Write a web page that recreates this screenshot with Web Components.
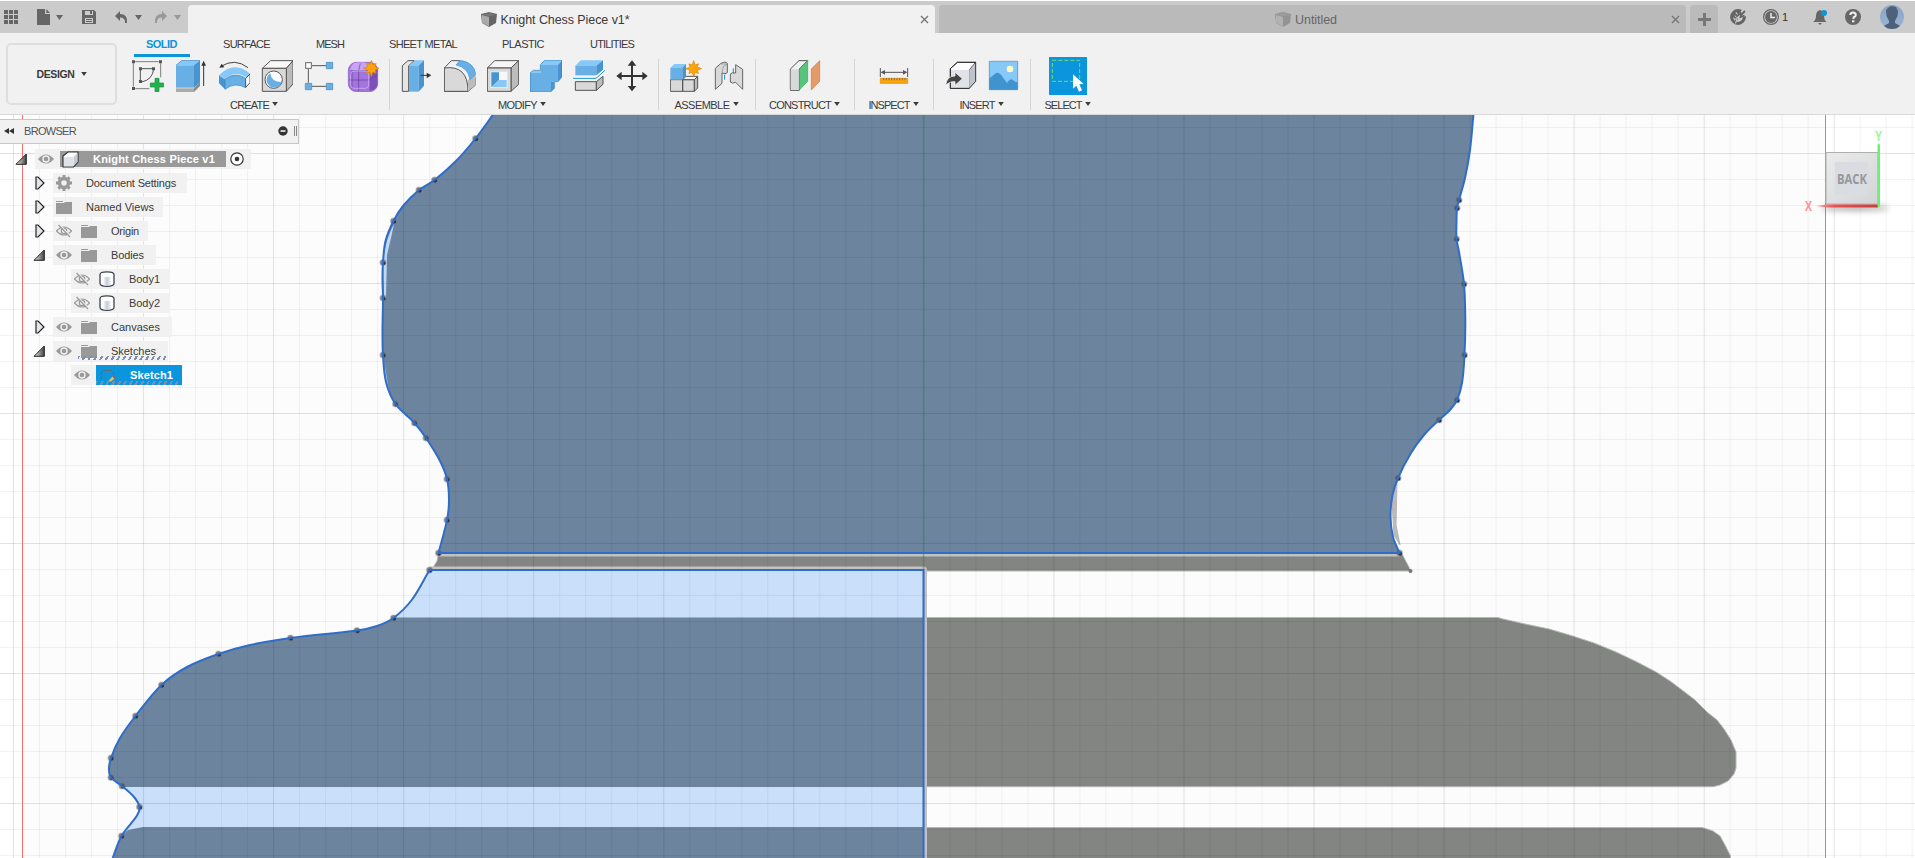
<!DOCTYPE html>
<html lang="en"><head><meta charset="utf-8"><title>Knight Chess Piece v1*</title>
<style>html,body{margin:0;height:100%;overflow:hidden}body{font:11px/14px "Liberation Sans",Arial,sans-serif;color:#3a3a3a}</style></head>
<body><cad-app></cad-app>
<script>
const make=(name,html,setup)=>customElements.define(name,class extends HTMLElement{
  connectedCallback(){ if(this.shadowRoot)return; const r=this.attachShadow({mode:'open'});
    r.innerHTML=typeof html==='function'?html(this):html; if(setup)setup(this,r);} });
const at=(e,n,d='')=>e.getAttribute(n)??d;

/* text tracked to an exact advance width */
make('fit-text','<style>:host{display:inline-block;white-space:nowrap}span{display:inline-block}</style><span><slot></slot></span>',(e,r)=>{
  const s=r.querySelector('span'),w=+at(e,'w'),n=e.textContent.length;
  s.style.letterSpacing=((w-s.getBoundingClientRect().width)/n).toFixed(3)+'px';
});

/* icon art; viewBox is part of each entry */
const B='#68afe5',BD='#4794d0',BL='#86c8f8',G='#d9d9d9',GD='#bcbcbc',GL='#efefef',K='stroke="#555" stroke-width="3"';
const star=(x,y,s)=>{let p='';for(let i=0;i<16;i++){const a=i*Math.PI/8-Math.PI/2,q=i%2?s*.5:(i%4?s*.85:s);p+=(x+Math.cos(a)*q).toFixed(1)+','+(y+Math.sin(a)*q).toFixed(1)+' '}return `<polygon points="${p}" fill="#ffa40a" stroke="#d98500" stroke-width="2"/>`};
const eye=`<path d="M0 8Q8-1 16 8Q8 17 0 8Z" fill="#999"/><circle cx="8" cy="8" r="3.7" fill="#f1f1f1"/><circle cx="8" cy="8" r="2.3" fill="#999"/>`;
const ICONS={
 sketch:['396 180 96 96',`<path d="M406 185H476M482 190V232M400 190V260M406 266H448" fill="none" stroke="#666" stroke-width="2.5"/><path d="M421 206V246M426 206H461Q458 240 424 246" fill="none" stroke="#555" stroke-width="3"/><g fill="#555"><path d="M396 181h9v9h-9zM477 181h9v9h-9zM396 261h9v9h-9zM417 202h9v9h-9zM456 202h9v9h-9zM417 240h9v9h-9z"/></g><path d="M465 235h12v14h14v12h-14v14h-12v-14h-14v-12h14z" fill="#22b14c" stroke="#13913a" stroke-width="2"/>`],
 extrude:['525 180 96 96',`<path d="M528 265H582V276H528z" fill="#aaa"/><path d="M582 265L600 245V258L582 276z" fill="#888"/><path d="M528 196L546 181H600L582 196z" fill="${BL}"/><path d="M528 196H582V263H528z" fill="${B}"/><path d="M582 196L600 181V246L582 263z" fill="${BD}"/><path d="M528 196L546 181H600" fill="none" stroke="#3b82b8" stroke-width="2"/><path d="M611 258V195" stroke="#333" stroke-width="3"/><path d="M604 197L611 182L618 197z" fill="#333"/>`],
 revolve:['651 180 96 96',`<path d="M660 199Q702 173 741 203" fill="none" stroke="#444" stroke-width="3"/><path d="M655 203L662 191L670 202z" fill="#333"/><path d="M654 226Q700 180 748 222L735 232Q702 210 672 237z" fill="${BL}"/><path d="M654 226Q660 232 672 238V268L654 250z" fill="${BD}"/><path d="M672 238Q702 214 734 235V263Q702 245 672 268z" fill="${B}" stroke="#3b86bd" stroke-width="2"/><path d="M734 235L747 222V248L734 262z" fill="#fff" ${K}/>`],
 hole:['780 180 96 96',`<path d="M784 205L809 182H876L856 205z" fill="#f8f8f8" ${K}/><path d="M856 205L876 182V252L856 274z" fill="${GD}" ${K}/><path d="M784 205H856V274H784z" fill="${G}" ${K}/><circle cx="818" cy="239" r="26" fill="#fff" ${K}/><path d="M808 220Q810 246 842 246A23 23 0 1 1 808 220z" fill="${B}"/>`],
 pattern:['909 180 96 96',`<path d="M933 197H976M922 207V248M933 259H976" stroke="#555" stroke-width="3"/><rect x="914" y="188" width="17" height="17" fill="#fff" stroke="#666" stroke-width="3"/><g fill="${B}" stroke="#3c88c0" stroke-width="2"><path d="M976 187h19v19h-19zM913 250h19v19h-19zM976 250h19v19h-19z"/></g>`],
 form:['1038 180 96 96',`<rect x="1042" y="187" width="88" height="88" rx="24" fill="#a274dc" stroke="#8a58c8" stroke-width="2"/><path d="M1058 190Q1090 180 1126 203L1108 214H1048Q1046 202 1058 190z" fill="#c9a4f5"/><path d="M1108 214L1129 203V255Q1120 274 1105 272z" fill="#7d51b7"/><path d="M1053 212V266M1044 240H1104L1129 226M1078 190L1073 212V272M1048 212H1106" stroke="#64409a" stroke-width="2" fill="none"/><rect x="1049" y="213" width="54" height="52" rx="10" fill="none" stroke="#d6bbf6" stroke-width="2"/>${star(1111,205,24)}`],
 push:['63 180 96 96',`<path d="M67 197L84 182H103L86 197V274H67z" fill="#e6e6e6" ${K}/><path d="M87 197L105 181H132L116 197z" fill="${BL}"/><path d="M87 197H116V275H87z" fill="${B}"/><path d="M116 197L132 181V257L116 275z" fill="${BD}"/><path d="M122 226H142" stroke="#333" stroke-width="3"/><path d="M140 218L154 226L140 235z" fill="#333"/>`],
 fillet:['192 180 96 96',`<path d="M193 204L214 182H238L262 200L287 236V255L264 274H193z" fill="#f2f2f2" ${K}/><path d="M193 204Q264 194 264 274H193z" fill="${G}" ${K}/><path d="M264 240L287 222V255L264 274z" fill="${GD}"/><path d="M228 195L240 181Q282 187 287 222L270 239Q264 202 228 195z" fill="${B}" stroke="${BD}" stroke-width="2"/>`],
 shell:['321 180 96 96',`<path d="M322 204L344 182H416L393 204z" fill="#f6f6f6" ${K}/><path d="M393 204L416 182V253L393 274z" fill="${GD}" ${K}/><path d="M322 204H393V274H322z" fill="${G}" ${K}/><path d="M332 215H382V264H332z" fill="#f8f8f8"/><path d="M334 217H357V240L334 262z" fill="${BD}"/><path d="M357 240H380V262H334z" fill="${BL}"/>`],
 combine:['450 180 96 96',`<path d="M450 218L460 211H480V195L494 181H546L534 195H482V218z" fill="${BL}"/><path d="M450 218H482V195H534V245H513V275H450z" fill="${B}"/><path d="M534 195L546 181V231L534 245H523V265L513 275V245H534z" fill="${BD}"/><path d="M451 275V218L460 211H481V194L494 181H545V232L534 245H524V264L513 275z" fill="none" stroke="#3b86bd" stroke-width="2"/>`],
 split:['579 180 96 96',`<path d="M586 245H649V271H586z" fill="${G}" ${K}/><path d="M649 245L669 229V253L649 271z" fill="${GD}" ${K}/><path d="M586 197L602 181H669L649 197z" fill="${BL}"/><path d="M586 197H649V226H586z" fill="${B}"/><path d="M649 197L669 181V210L649 226z" fill="${BD}"/><path d="M578 235H648L675 210" fill="none" stroke="#fff" stroke-width="9"/><path d="M578 235H648L675 211" fill="none" stroke="#0c92d8" stroke-width="3"/>`],
 move:['708 180 96 96',`<path d="M756 193V263M722 228H790" stroke="#333" stroke-width="6"/><path d="M743 197L756 181L769 197zM743 258L756 274L769 258zM725 215L709 228L725 241zM787 215L803 228L787 241z" fill="#333"/>`],
 component:['870 180 96 96',`<path d="M871 239H908V274H871zM908 239H943V274H908z" fill="${G}" ${K}/><path d="M908 239L918 229H953L943 239z" fill="#f6f6f6" ${K}/><path d="M943 239L953 229V264L943 274z" fill="${GD}" ${K}/><path d="M871 204L883 192H918L907 204z" fill="${BL}"/><path d="M871 204H907V239H871z" fill="${B}"/><path d="M907 204L918 192V229L907 239z" fill="${BD}"/>${star(941,206,24)}`],
 joint:['999 180 96 96',`<g fill="${G}" stroke="#666" stroke-width="3"><path d="M1006 205L1023 190Q1037 183 1042 190V218Q1036 224 1026 219V250L1006 268z"/><path d="M1088 208L1067 194V219Q1056 216 1051 222V246Q1057 252 1067 247L1088 268z"/></g><path d="M1024 192L1042 192L1030 200L1026 219" fill="none" stroke="#888" stroke-width="2"/><path d="M1034 224V239M1060 205V220" stroke="#0c92d8" stroke-width="3"/>`],
 plane:['87 180 96 96',`<path d="M91 207L117 182H143L118 207V271H91z" fill="#f2f2f2" ${K}/><path d="M92 208H117V270H92z" fill="${G}"/><path d="M118 207L143 182V244L118 270z" fill="#57c579" stroke="#35a45a" stroke-width="2"/><path d="M154 207L179 182V244L154 270z" fill="#e69a68" stroke="#c57a48" stroke-width="2"/>`],
 measure:['354 180 96 96',`<path d="M361 204V231M443 204V231M366 217H438" stroke="#555" stroke-width="3"/><path d="M362 217L375 210V224zM442 217L429 210V224z" fill="#555"/><path d="M361 235H443V250H361z" fill="#ffa40a" stroke="#d98700" stroke-width="2"/><path d="M371 234v7M379 234v7M387 234v7M395 234v7M403 234v7M411 234v7M419 234v7M427 234v7M435 234v7" stroke="#555" stroke-width="2"/>`],
 insert:['555 180 96 96',`<path d="M571 206L592 187H647L628 210V265H571z" fill="#fff" stroke="#333" stroke-width="3"/><path d="M573 210H628V264H573z" fill="#e0e2e7"/><path d="M628 210L646 190V244L628 265z" fill="#bfc2ca"/><path d="M571 206L592 187H647V244L628 265H571z" fill="none" stroke="#333" stroke-width="3"/><path d="M557 256Q560 228 585 228V217L607 236L585 256V245Q570 243 557 256z" fill="#444" stroke="#fff" stroke-width="2"/>`],
 canvas:['684 180 96 96',`<path d="M688 184H773V269H688z" fill="${BL}" stroke="#3d89c1" stroke-width="2"/><path d="M688 235Q697 230 704 222Q713 214 723 224Q732 237 741 249Q752 232 760 241Q765 248 773 246V269H688z" fill="#3f93ce"/><circle cx="750" cy="207" r="10" fill="#fff9c4"/>`],
 select:['867 171 114 114',`<path d="M867 171h114v114h-114z" fill="#0b95dc"/><path d="M877 181H959V244H877z" fill="none" stroke="#72dc79" stroke-width="3" stroke-dasharray="12 6"/><path d="M939 223V266L949 257L957 275L966 271L958 253L971 252z" fill="#fff"/>`],
 apps:['0 0 14 14','<path d="M0 0h4v4H0zM5 0h4v4H5zM10 0h4v4h-4zM0 5h4v4H0zM5 5h4v4H5zM10 5h4v4h-4zM0 10h4v4H0zM5 10h4v4H5zM10 10h4v4h-4z" fill="#666"/>'],
 doc:['0 0 13 16','<path d="M0 0H8V5H13V16H0zM9.3 0L13 4H9.3z" fill="#666"/>'],
 save:['0 0 14 14','<path d="M0 0H12L14 2V14H0z" fill="#666"/><path d="M3 1H11V5H3zM3 8H11V13H3z" fill="#ccc"/><path d="M8 1h2v3H8zM4 9h6v1H4zM4 11h6v1H4z" fill="#666"/>'],
 undo:['0 0 13 12','<path d="M5 0V3Q13 3 12 12H10Q10.500 6.500 5 6.500V10L0 5z" fill="#666"/>'],
 redo:['0 0 13 12','<path d="M8 0V3Q0 3 1 12H3Q2.500 6.500 8 6.500V10L13 5z" fill="#999"/>'],
 down:['0 0 7 5','<path d="M0 0H7L3.500 5z" fill="currentColor"/>'],
 cube:['0 0 16 15','<path d="M0 2L8 0L16 2L15 11L8 15L1 11z" fill="#666"/><path d="M1 3L8 5V14.500L1 10.500z" fill="#aaa"/><path d="M1 2.500L8 1L15 2.500L8 4.500z" fill="#777"/>'],
 close:['0 0 9 9','<path d="M1 1L8 8M8 1L1 8" stroke="#777" stroke-width="1.400"/>'],
 plus:['0 0 13 13','<path d="M6.500 0V13M0 6.500H13" stroke="#777" stroke-width="3"/>'],
 ext:['0 0 16 16','<circle cx="8" cy="8" r="6.400" fill="none" stroke="#646464" stroke-width="3"/><path d="M8.500 7.500L12 0H16V7L9 9z" fill="#cbcbcb"/><path d="M4.500 14L7 10L4 8Q3 6 4.500 4.500L7 7L9 5.500L7.500 3Q11 2.500 11 6L15 2M9.500 8.500L14.500 6.500" fill="none" stroke="#646464" stroke-width="1.800"/><path d="M5.500 9.500L7 10L5.500 14.500" fill="none" stroke="#cbcbcb" stroke-width="1.200"/>'],
 clock:['0 0 16 16','<circle cx="8" cy="8" r="7.400" fill="none" stroke="#666" stroke-width="1.200"/><circle cx="8" cy="8" r="5.900" fill="#666"/><path d="M8 4V8.500H12" fill="none" stroke="#eee" stroke-width="1.500"/>'],
 bell:['0 0 15 16','<path d="M7 1Q11 2 11 7Q11 11 13.500 13H0Q3 11 3 7Q3 2 7 1zM5 14H9L7 16z" fill="#666"/><circle cx="11" cy="4" r="3" fill="#0b95dc"/>'],
 help:['0 0 16 16','<circle cx="8" cy="8" r="8" fill="#666"/><path d="M5.300 6Q5.300 3.500 8 3.500Q10.800 3.500 10.800 6Q10.800 7.500 8.700 8.300L8.300 10" fill="none" stroke="#eee" stroke-width="2"/><path d="M7 11.300h2.400v2H7z" fill="#eee"/>'],
 user:['0 0 24 24','<defs><linearGradient id="a" x2="0" y2="1"><stop stop-color="#86a3c6"/><stop offset="1" stop-color="#9fb5d3"/></linearGradient><clipPath id="c"><circle cx="12" cy="12" r="12"/></clipPath></defs><circle cx="12" cy="12" r="12" fill="url(#a)"/><g clip-path="url(#c)" fill="#4d617b"><path d="M6 5L9 2L12 1L16 2L18 6L17.500 11L15 16V18L22 22V24H2V22L9 18V16L6.500 11z"/></g>'],
 rewind:['0 0 10 6','<path d="M5 0V6L0 3zM10 0V6L5 3z" fill="#333"/>'],
 minus:['0 0 10 10','<circle cx="5" cy="5" r="4.700" fill="#333"/><path d="M2.500 5H7.500" stroke="#fff" stroke-width="1.500"/>'],
 open:['0 0 12 12','<defs><linearGradient id="g"><stop stop-color="#eee"/><stop offset="1" stop-color="#444"/></linearGradient></defs><path d="M1 11.300L11.300 1V11.300z" fill="url(#g)" stroke="#222"/>'],
 shut:['0 0 10 14','<path d="M1 1H3L9 7L3 13H1z" fill="#e4e5ea" stroke="#222" stroke-width="1.200"/>'],
 eye:['0 0 16 16',eye],
 eyeoff:['0 0 16 16','<path d="M.5 8Q8 0 15.500 8Q8 16 .5 8Z" fill="none" stroke="#999" stroke-width="1.200"/><circle cx="8" cy="8" r="2.700" fill="none" stroke="#999" stroke-width="1.200"/><path d="M3.500 2L14.500 13" stroke="#f1f1f1" stroke-width="1.500"/><path d="M2.500 2L14 14" stroke="#999" stroke-width="1.200"/>'],
 folder:['0 0 16 16','<path d="M0 2H7V3H0zM0 4H8L9 3H16V15H0z" fill="#999"/>'],
 gear:['0 0 16 16','<circle cx="8" cy="8" r="4.500" fill="none" stroke="#999" stroke-width="3.500"/><g stroke="#999" stroke-width="3"><path d="M8 0V3M8 13V16M0 8H3M13 8H16M2.400 2.400L4.500 4.500M11.500 11.500L13.600 13.600M13.600 2.400L11.500 4.500M4.500 11.500L2.400 13.600"/></g>'],
 body:['0 0 16 16','<defs><linearGradient id="b"><stop stop-color="#fff"/><stop offset=".5" stop-color="#c6cad5"/><stop offset="1" stop-color="#f8f8fa"/></linearGradient></defs><path d="M1 3.500Q1 .8 8 .8Q15 .8 15 3.500V12.500Q15 15.300 8 15.300Q1 15.300 1 12.500z" fill="#fff" stroke="#3c4350" stroke-width="1.300"/><path d="M4 6H12V14Q8 15 4 14z" fill="url(#b)"/>'],
 part:['0 0 17 17','<path d="M1 5L6 1H16V11L11.500 16H1z" fill="#fff" stroke="#333" stroke-width="1.200"/><path d="M2 6H11V15H2z" fill="#dfe2e9"/><path d="M11.500 6L15.500 2V11L11.500 15z" fill="#c5c9d4"/>'],
 radio:['0 0 14 14','<circle cx="7" cy="7" r="6.200" fill="#fff" stroke="#333" stroke-width="1.200"/><circle cx="7" cy="7" r="2.300" fill="#333"/>'],
 sk:['0 0 16 16','<path d="M3 3.500H12M13.500 4V9M1.500 4V13" fill="none" stroke="#626b74" stroke-width="1.200" stroke-dasharray="4 1"/><path d="M12.500 9.500L14.500 11.500L11 14.500L8.500 14z" fill="#f3c042"/><path d="M12.500 9.500L15 9.500L14.500 12z" fill="#e33"/>']
};
make('ui-icon',e=>{const [vb,art]=ICONS[at(e,'name')],w=at(e,'w','32'),h=at(e,'h',w);
 return `<style>:host{display:block;flex:none;width:${w}px;height:${h}px}svg{display:block}</style><svg width="${w}" height="${h}" viewBox="${vb}">${art}</svg>`});

make('doc-tab',e=>`<style>:host{display:flex;align-items:center;box-sizing:border-box;width:747px;height:28px;background:#bababa;border-radius:4px 4px 0 0;color:#666;font-size:12.5px}
:host([active]){background:#f1f1f1;color:#3a3a3a}.t{flex:1;display:flex;justify-content:center;align-items:center;gap:4px;padding:1px 0 0 2px}:host(:not([active])) .t ui-icon{opacity:.45}.x{margin-right:6px}</style>
<div class="t"><ui-icon name="cube" w="16" h="15"></ui-icon><slot></slot></div><ui-icon class="x" name="close" w="9"></ui-icon>`);

make('title-bar',`<style>:host{display:flex;height:33px;box-sizing:border-box;border-top:1px solid #fff;background:#cbcbcb;align-items:flex-end;color:#666}
.q,.r{display:flex;align-items:center;height:32px}.q{width:188px;box-sizing:border-box;padding-left:4px}.q>*{margin-right:var(--m)}
doc-tab+doc-tab{margin-left:4px}.add{width:28px;height:28px;margin-left:4px;background:#bababa;border-radius:4px 4px 0 0;display:grid;place-items:center}
.r{flex:1;padding-left:12px;color:#333}</style>
<div class="q"><ui-icon name="apps" w="14" style="--m:19px"></ui-icon><ui-icon name="doc" w="13" h="16" style="--m:6px"></ui-icon><ui-icon name="down" w="7" h="5" style="--m:19px"></ui-icon><ui-icon name="save" w="14" style="--m:19px"></ui-icon><ui-icon name="undo" w="13" h="12" style="--m:7px"></ui-icon><ui-icon name="down" w="7" h="5" style="--m:12px"></ui-icon><ui-icon name="redo" w="13" h="12" style="--m:7px"></ui-icon><ui-icon name="down" w="7" h="5" style="color:#999"></ui-icon></div>
<doc-tab active><fit-text w="129">Knight Chess Piece v1*</fit-text></doc-tab><doc-tab><fit-text w="42">Untitled</fit-text></doc-tab>
<div class="add"><ui-icon name="plus" w="13"></ui-icon></div>
<div class="r"><ui-icon name="ext" w="16"></ui-icon><ui-icon name="clock" w="16" style="margin:0 3px 0 17px"></ui-icon><span style="width:6px">1</span><ui-icon name="bell" w="15" h="16" style="margin-left:25px"></ui-icon><ui-icon name="help" w="16" style="margin-left:17px"></ui-icon><ui-icon name="user" w="24" style="margin-left:19px"></ui-icon></div>`);

make('tool-group',e=>`<style>:host{display:flex;flex-direction:column;align-items:center;box-sizing:border-box;height:51px;border-right:1px solid #d5d5d5;margin-top:2px}
:host(:last-child){border:0}.i{display:flex;flex:none;gap:11px;height:38px;margin-top:-2px;align-items:center}.c{display:flex;flex:none;align-items:center;gap:3px;height:14px;margin-top:3px;margin-right:${at(e,'shift','0')}px}.c ui-icon{margin-bottom:2px}</style>
<div class="i">${at(e,'icons').split(' ').map(n=>`<ui-icon name="${n}" w="${n=='select'?38:32}"></ui-icon>`).join('')}</div><div class="c"><slot></slot><ui-icon name="down" w="6" h="4"></ui-icon></div>`);

make('tool-ribbon',`<style>:host{display:flex;height:82px;box-sizing:border-box;background:#f1f1f1;border-bottom:1px solid #d9d9d9}
.d{box-sizing:border-box;width:111px;height:62px;margin:10px 0 0 6px;border:2px solid #dedede;border-radius:5px;display:flex;align-items:center;justify-content:center;gap:6px;font-weight:bold;font-size:10.5px}
.t{display:flex;height:24px;box-sizing:border-box;padding:4px 0 0 29px}.t fit-text{margin-right:var(--g)}
.s{font-weight:bold;color:#0b95dc}.u{width:56px;height:3px;background:#0b95dc;margin:-3px 0 0 17px}.g{display:flex}</style>
<div class="d"><fit-text w="38">DESIGN</fit-text><ui-icon name="down" w="6" h="4"></ui-icon></div>
<div class="m"><div class="t"><fit-text class="s" w="31" style="--g:46px">SOLID</fit-text><fit-text w="47" style="--g:46px">SURFACE</fit-text><fit-text w="28" style="--g:45px">MESH</fit-text><fit-text w="68" style="--g:45px">SHEET METAL</fit-text><fit-text w="42" style="--g:46px">PLASTIC</fit-text><fit-text w="44">UTILITIES</fit-text></div><div class="u"></div>
<div class="g">
<tool-group style="width:273px;padding-left:5px" shift="3" icons="sketch extrude revolve hole pattern form"><fit-text w="39">CREATE</fit-text></tool-group>
<tool-group style="width:269px;padding-left:1px" shift="5" icons="push fillet shell combine split move"><fit-text w="39">MODIFY</fit-text></tool-group>
<tool-group style="width:97px;padding-left:1px" shift="2" icons="component joint"><fit-text w="55">ASSEMBLE</fit-text></tool-group>
<tool-group style="width:99px" shift="1" icons="plane"><fit-text w="62">CONSTRUCT</fit-text></tool-group>
<tool-group style="width:79px" shift="1" icons="measure"><fit-text w="41">INSPECT</fit-text></tool-group>
<tool-group style="width:97px;padding-left:1px" shift="2" icons="insert canvas"><fit-text w="35">INSERT</fit-text></tool-group>
<tool-group style="width:74px" shift="1" icons="select"><fit-text w="37">SELECT</fit-text></tool-group></div></div>`);

make('tree-row',e=>{const ind=+at(e,'indent'),sel=e.hasAttribute('selected'),root=e.hasAttribute('root'),exp=at(e,'expand'),vis=at(e,'vis'),icon=at(e,'icon');
 return `<style>:host{display:flex;height:20px;align-items:center;position:relative}
.e{width:${ind}px;display:flex;justify-content:flex-end;box-sizing:border-box;padding-right:8px;flex:none}
.b{display:flex;align-items:center;background:#f1f1f1;height:20px;width:${at(e,'w')}px;box-sizing:border-box;padding-left:3px}
.l{display:flex;align-items:center;gap:14px;margin-left:${vis?9:0}px}
:host([root]) .l{background:#999;color:#fff;font-weight:bold;height:16px;width:166px;margin-left:6px;box-sizing:border-box;padding-left:2px;margin-right:4px}
:host([selected]) .l{background:#0b95dc;color:#fff;font-weight:bold;height:20px;width:86px;flex:none;box-sizing:border-box;padding-left:4px;margin-left:6px}
.h{position:absolute;left:${sel?96:78}px;bottom:${sel?0:1}px;width:${sel?82:88}px;height:4px;background:repeating-linear-gradient(120deg,#7e90ad 0 2px,transparent 2px 5px)}</style>
<div class="e">${exp?`<ui-icon name="${exp}" w="${exp=='open'?12:10}" h="${exp=='open'?12:14}"></ui-icon>`:''}</div>
<div class="b">${vis?`<ui-icon name="${vis}" w="16"></ui-icon>`:''}<div class="l"><ui-icon name="${icon}" w="${root?17:16}"></ui-icon><slot></slot></div>${root?'<ui-icon name="radio" w="14"></ui-icon>':''}</div>${e.hasAttribute('hatch')?'<div class="h"></div>':''}`});

const rows=[[35,216,'root','open','eye','part','Knight Chess Piece v1',122],[53,134,'','shut','','gear','Document Settings',90],[53,110,'','shut','','folder','Named Views',68],[53,95,'','shut','eyeoff','folder','Origin',28],[53,103,'','open','eye','folder','Bodies',33],[71,99,'','','eyeoff','body','Body1',31],[71,99,'','','eyeoff','body','Body2',31],[53,119,'','shut','eye','folder','Canvases',49],[53,115,'hatch','open','eye','folder','Sketches',45],[71,111,'selected hatch','','eye','sk','Sketch1',43]];
make('browser-panel',`<style>:host{display:block;position:relative;width:300px}.h{display:flex;align-items:center;box-sizing:border-box;width:299px;height:25px;background:#f1f1f1;border:1px solid #c6c6c6;border-left:0;color:#555;padding:0 0 2px 4px}
.m{margin-left:auto;margin-right:6px}.k{width:1px;height:10px;border:solid #888;border-width:0 1px;margin-right:1px}.r{display:flex;flex-direction:column;gap:4px;margin-top:5px}</style>
<div class="h"><ui-icon name="rewind" w="10" h="6" style="margin-right:10px"></ui-icon><fit-text w="52">BROWSER</fit-text><ui-icon class="m" name="minus" w="10"></ui-icon><div class="k"></div></div>
<div class="r">${rows.map(r=>`<tree-row indent="${r[0]}" w="${r[1]}" ${r[2]} expand="${r[3]}" vis="${r[4]}" icon="${r[5]}"><fit-text w="${r[7]}">${r[6]}</fit-text></tree-row>`).join('')}</div>`);

/* Catmull-Rom spline as cubic segments; a third value of 1 marks a plain shaping point without a fit dot */
const spline=p=>{let d=`${p[0][0]} ${p[0][1]}`;for(let i=0;i<p.length-1;i++){const a=p[i-1]||p[i],b=p[i],c=p[i+1],e=p[i+2]||c,L=(u,v)=>Math.hypot(u[0]-v[0],u[1]-v[1]),bc=L(b,c),
 t1=bc/(L(a,b)+bc),t2=bc/(L(c,e)+bc),k=2/3;
 d+=`C${b[0]+(c[0]-a[0])*t1*k/2} ${b[1]+(c[1]-a[1])*t1*k/2} ${c[0]-(e[0]-b[0])*t2*k/2} ${c[1]-(e[1]-b[1])*t2*k/2} ${c[0]} ${c[1]}`}return d};
const L1=[[493.5,114,1],[475.5,138.5],[456,161,1],[434.5,180],[419,190],[403,206,1],[393.5,221],[385.5,241,1],[383,262.5],[382.5,280,1],[383,298],[382.5,330,1],[383,355],[386,382,1],[395.5,404],[414.5,423],[426,438],[440,461,1],[447,479],[449,500,1],[447,520],[438.5,553]];
const R1=[[1399.5,553],[1393,537,1],[1390.5,517,1],[1392.5,495,1],[1398,478],[1411,453,1],[1424,435,1],[1439,420],[1450,410,1],[1457,400],[1462,383,1],[1464.5,355],[1465.3,320,1],[1464,284],[1459,252,1],[1456.5,239],[1456.5,222,1],[1457,208],[1459,200],[1465,178,1],[1470,150,1],[1473.5,114,1]];
const L2=[[429.5,570],[411.7,600,1],[393.5,618],[377,626,1],[357,630.5],[290.5,638],[250,645,1],[218.5,654],[187,667,1],[161.5,685],[135.5,716],[120,738,1],[111,758],[109,769,1],[111,777.5],[122,786],[134,797,1],[139.5,807],[137,815.5,1],[121.5,836],[112,860,1]];
const up='M'+spline(L1)+'L'+spline(R1)+'Z',low='M923.5 570L'+spline(L2)+'H923.5Z';
let minor='',major='';
for(let i=0;i<75;i++){const x=(13.5+i*26.01).toFixed(1);if(i%5)minor+=`M${x} 114V858`;else major+=`M${x} 114V858`}
for(let i=0;i<29;i++){const y=(127.5+i*26).toFixed(1);if(i%5==1)major+=`M0 ${y}H1915`;else minor+=`M0 ${y}H1915`}
const dots=[...L1,...R1,...L2].filter(p=>!p[2]).map(p=>`<circle cx="${p[0]}" cy="${p[1]}" r="2.700" fill="#333" fill-opacity=".6" stroke="#777" stroke-opacity=".4" stroke-width="1.800"/><circle cx="${p[0]+.8}" cy="${p[1]+.8}" r="1.600" fill="#1f3050"/>`).join('');
make('sketch-canvas',`<style>:host{display:block}svg{display:block}</style>
<svg width="1915" height="743" viewBox="0 115 1915 743"><defs><clipPath id="low"><path d="${low}"/></clipPath>
<linearGradient id="f" x1="0" y1="0" x2="1" y2="1"><stop stop-color="#e9eaeb"/><stop offset="1" stop-color="#d0d1d2"/></linearGradient><filter id="bl" x="-20%" y="-200%" width="140%" height="500%"><feGaussianBlur stdDeviation="3"/></filter>
<linearGradient id="rx"><stop stop-color="#ff9a9a"/><stop offset=".3" stop-color="#f05050"/><stop offset="1" stop-color="#c83c3c"/></linearGradient></defs>
<path d="M0 115H1915V858H0z" fill="#fff"/><path d="M22.500 115H1825.500V858H22.500z" fill="#fcfcfc"/>
<g fill="#838583" stroke="#b5b6b5" stroke-width="1"><path d="M439 552H1401L1411 571H431L437 561z"/><path d="M1397 480L1396 525L1400 545L1394 535L1392 500z" fill="#bbb"/>
<path d="M920 617.500H1498L1503 619L1525 624L1549 629L1571 635.500L1594 643L1616 652L1637 662L1656 672L1670 681L1682 690L1695 700L1707 712L1717 720L1724 729L1731 740L1736 752V768L1734 774L1728 781L1720 785L1713 786.700H920z"/><path d="M920 827.500H1702L1713 831L1720 836L1725 845L1730 855L1731 860H920z"/></g>
<g fill="none" stroke="#c1c2c1" stroke-width="7" stroke-linejoin="round"><path d="M439 553H1399.500"/><path d="M429.500 570H923.500V858"/></g>
<path d="${up}" fill="#6d849e"/><path d="M394 224Q385 240 383 263L384 298H386L387 255L391 238z" fill="#c0d8f2"/><path d="M384 360L389 390L386 386z" fill="#9dbada"/>
<path d="${low}" fill="#c9dffa"/><g clip-path="url(#low)" fill="#6d849e"><path d="M80 617.500H923V787H80z"/><path d="M80 870L121 836L128 830L143 827H923V870z"/></g>
<path d="${minor}" stroke="#000" stroke-opacity=".05"/><path d="${major}" stroke="#000" stroke-opacity=".11"/>
<path d="M923.500 115V570" stroke="#2c8a5c" stroke-opacity=".4" stroke-width="1.500"/><path d="M22.500 115V858M1825.500 115V858" stroke="#f46f6f" stroke-width="1"/>
${dots}<circle cx="1410.500" cy="571" r="2" fill="#777"/><path d="${up}${low}" fill="none" stroke="#2f6dc8" stroke-width="2"/>
<ellipse cx="1855" cy="208" rx="34" ry="2" fill="#555" opacity=".7" filter="url(#bl)"/><path d="M1826 152.500H1878V204H1826z" fill="url(#f)" stroke="#b0b0b0" stroke-width="1" fill-opacity=".93"/><path d="M1835 162H1868V195H1835z" fill="#d9dce0"/><path d="M1816 206L1828 204.500H1878V207.500H1828z" fill="url(#rx)"/><path d="M1877.500 145L1878.500 143L1880 145V207H1877.500z" fill="#6fef73"/>
<g font-family="Open Sans,sans-serif" font-weight="700"><text x="1837" y="184" font-size="14" fill="#96989e" textLength="30" lengthAdjust="spacingAndGlyphs">BACK</text><text x="1805" y="211" font-size="13.500" fill="#ff9393" textLength="7" lengthAdjust="spacingAndGlyphs">X</text><text x="1875" y="140.500" font-size="13.500" fill="#9df79d" textLength="7" lengthAdjust="spacingAndGlyphs">Y</text></g></svg>`);

make('cad-app',`<style>:host{display:flex;flex-direction:column;width:1915px;height:858px;overflow:hidden}.w{position:relative;flex:1}browser-panel{position:absolute;left:0;top:4px}</style>
<title-bar></title-bar><tool-ribbon></tool-ribbon><div class="w"><sketch-canvas></sketch-canvas><browser-panel></browser-panel></div>`);
</script></body></html>
